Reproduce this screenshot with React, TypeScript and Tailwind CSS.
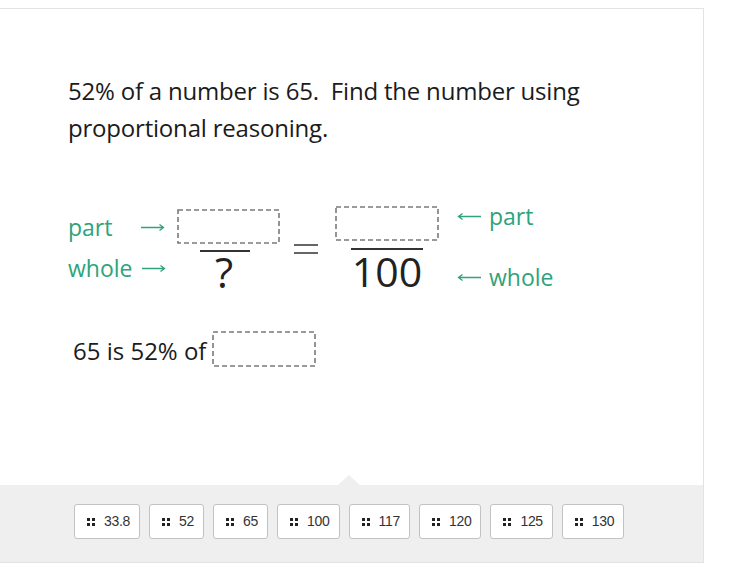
import React from "react";

const Dashed = ({ w, h }: { w: number; h: number }) => (
  <svg width={w} height={h} className="block">
    <rect x={1} y={1} width={w - 2} height={h - 2} fill="none" stroke="#7a7a7a" strokeWidth={1.6} strokeDasharray="5 3" />
  </svg>
);

const Arrow = ({ left }: { left?: boolean }) => (
  <svg width={25} height={12} viewBox="0 0 25 12" className="block" style={left ? { transform: "scaleX(-1)" } : undefined}>
    <path d="M1 6.5H23.5M19.5 3.5L23.5 6.5L19.5 9.5" fill="none" stroke="#2fa37a" strokeWidth={1.3} />
  </svg>
);

const Grip = () => (
  <span className="grid grid-cols-2 gap-[2px] w-[8px] h-[8px]">
    <span className="w-[3px] h-[3px] bg-[#222]" />
    <span className="w-[3px] h-[3px] bg-[#222]" />
    <span className="w-[3px] h-[3px] bg-[#222]" />
    <span className="w-[3px] h-[3px] bg-[#222]" />
  </span>
);

const choices = ["33.8", "52", "65", "100", "117", "120", "125", "130"];

export default function App() {
  return (
    <div className="w-[730px] h-[574px] bg-white pt-[8px]" style={{ fontFamily: '"Open Sans", sans-serif' }}>
      <div className="w-[704px] h-[555px] border-t border-b border-r border-[#e3e3e3] flex flex-col">
        <div className="flex-1 pl-[68px] text-[#1b1b1b]">
          <p className="mt-[63px] text-[24px] leading-[37px] tracking-[-0.2px] w-[600px]">
            52% of a number is 65.&nbsp; Find the number using
            <br />
            proportional reasoning.
          </p>
          <div className="mt-[57px] flex items-start">
            <div className="w-[109px] text-[23px] leading-[24px] text-[#2fa37a]">
              <div className="mt-[12px] flex items-center">
                <span className="w-[72px]">part</span>
                <Arrow />
              </div>
              <div className="mt-[17px] flex items-center">
                <span className="w-[73px]">whole</span>
                <Arrow />
              </div>
            </div>
            <div className="flex flex-col">
              <div className="mt-[6px]">
                <Dashed w={103} h={35} />
              </div>
              <div className="mt-[6px] ml-[23px] w-[50px] h-[2px] bg-[#333]" />
              <div className="w-[94px] text-center text-[42px] leading-[42px] -mt-[1px] text-[#222] font-medium">?</div>
            </div>
            <div className="ml-[14px] mt-[41px] flex flex-col gap-[6px]">
              <div className="w-[24px] h-[2px] bg-[#666]" />
              <div className="w-[24px] h-[2px] bg-[#666]" />
            </div>
            <div className="ml-[17px] flex flex-col">
              <div className="mt-[3px]">
                <Dashed w={104} h={35} />
              </div>
              <div className="mt-[7px] ml-[16px] w-[72px] h-[2px] bg-[#333]" />
              <div className="w-[104px] text-center text-[41px] leading-[44px] -mt-[1px] text-[#222]">100</div>
            </div>
            <div className="ml-[18px] text-[23px] leading-[24px] text-[#2fa37a]">
              <div className="mt-[1px] flex items-center">
                <span className="w-[32px]"><Arrow left /></span>
                <span>part</span>
              </div>
              <div className="mt-[37px] flex items-center">
                <span className="w-[32px]"><Arrow left /></span>
                <span>whole</span>
              </div>
            </div>
          </div>
          <div className="mt-[38px] pl-[5px] flex items-center">
            <span className="text-[24px] leading-[30px] mr-[6px] mt-[4px]">65 is 52% of</span>
            <Dashed w={104} h={36} />
          </div>
        </div>
        <div className="relative h-[77px] bg-[#efefef] pt-[19px] pl-[74px] flex gap-[9px]" style={{ fontFamily: '"Liberation Sans", Arial, sans-serif' }}>
          <div className="absolute left-[338px] -top-[10px] w-0 h-0 border-l-[11px] border-r-[11px] border-b-[10px] border-l-transparent border-r-transparent border-b-[#efefef]" />
          {choices.map((c) => (
            <div key={c} className="h-[35px] bg-white border border-[#c2c2c2] rounded-[3px] flex items-center pl-[12px] pr-[9px] gap-[9px] text-[14px] text-[#333]">
              <Grip />
              <span className="tracking-[-0.3px]">{c}</span>
            </div>
          ))}
        </div>
      </div>
    </div>
  );
}
